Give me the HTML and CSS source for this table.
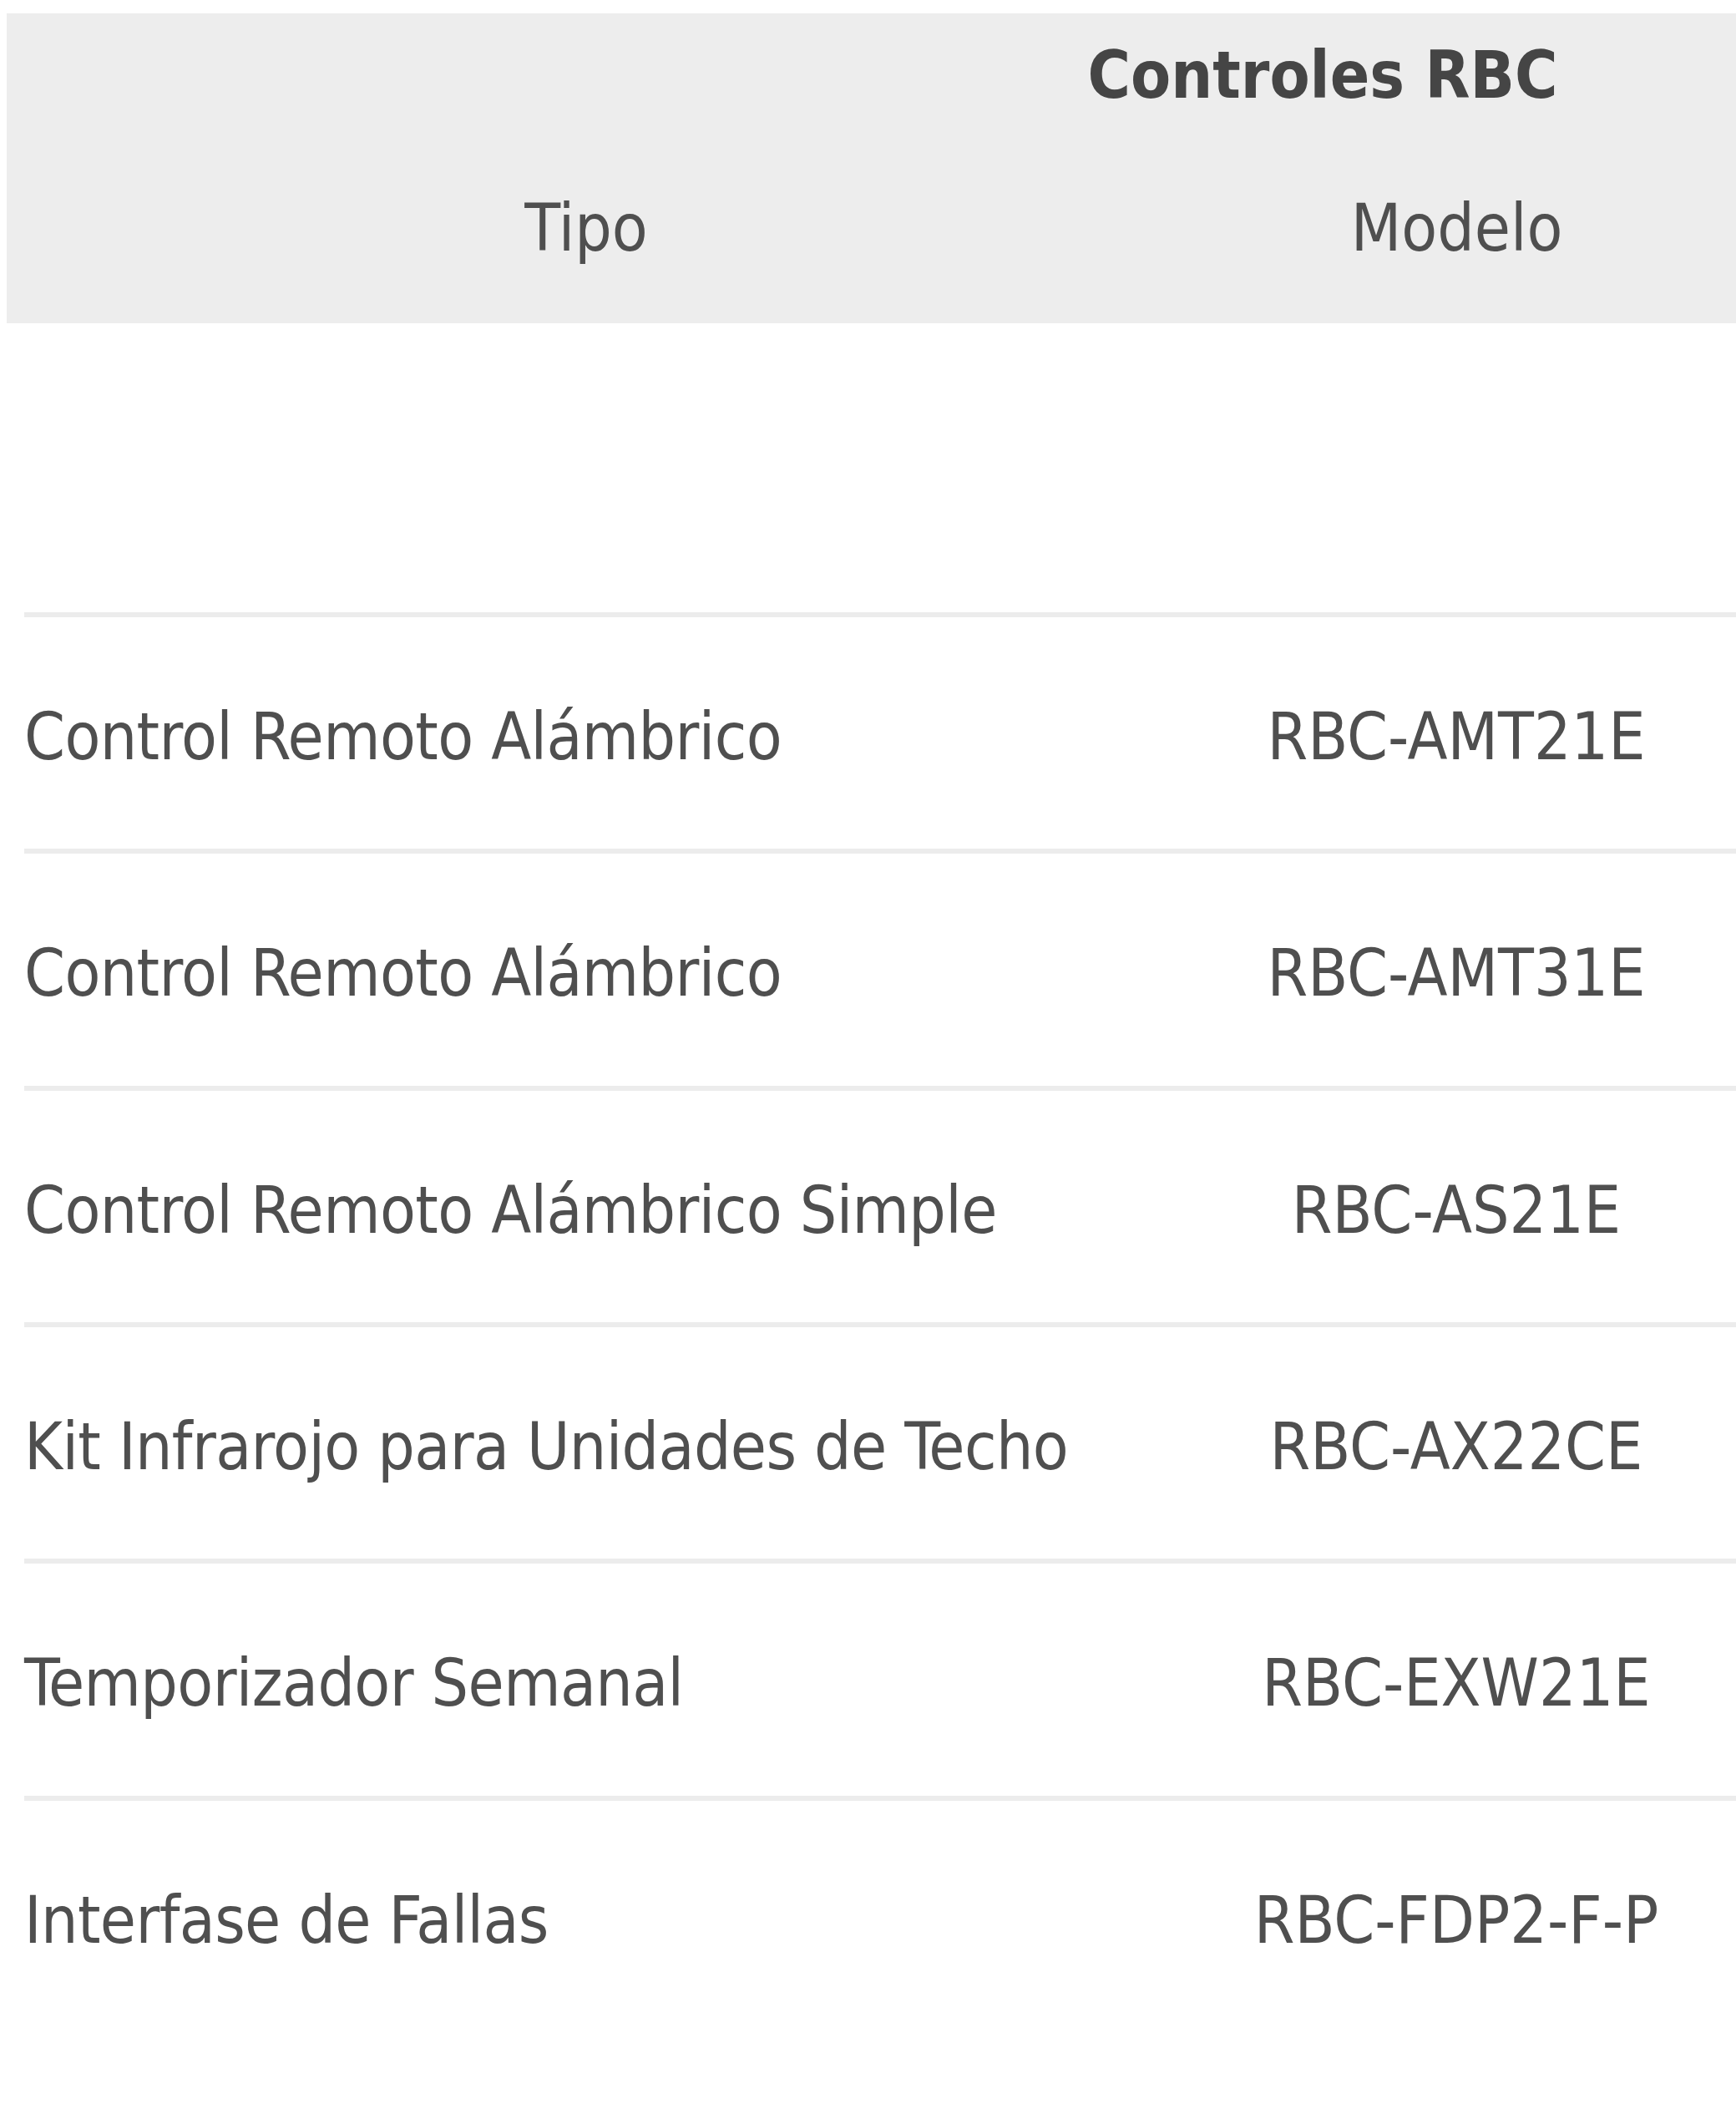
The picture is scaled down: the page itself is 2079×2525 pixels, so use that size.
FILE: index.html
```html
<!DOCTYPE html>
<html lang="es">
<head>
<meta charset="utf-8">
<title>Controles RBC</title>
<link rel="stylesheet" href="styles.css">
</head>
<body>
<div class="table">
  <div class="head">
    <div class="caption">Controles RBC</div>
    <div class="head-cols">
      <div class="th th-tipo">Tipo</div>
      <div class="th th-modelo">Modelo</div>
    </div>
  </div>
  <div class="spacer-row"></div>
  <div class="body">
    <div class="row"><div class="td td-type">Control Remoto Alámbrico</div><div class="td td-model">RBC-AMT21E</div></div>
    <div class="row"><div class="td td-type">Control Remoto Alámbrico</div><div class="td td-model">RBC-AMT31E</div></div>
    <div class="row"><div class="td td-type">Control Remoto Alámbrico Simple</div><div class="td td-model">RBC-AS21E</div></div>
    <div class="row"><div class="td td-type">Kit Infrarojo para Unidades de Techo</div><div class="td td-model">RBC-AX22CE</div></div>
    <div class="row"><div class="td td-type">Temporizador Semanal</div><div class="td td-model">RBC-EXW21E</div></div>
    <div class="row"><div class="td td-type">Interfase de Fallas</div><div class="td td-model">RBC-FDP2-F-P</div></div>
  </div>
</div>
</body>
</html>
```
FILE: styles.css
```css
html, body {
  margin: 0;
  padding: 0;
  background: #ffffff;
}

body {
  font-family: "DejaVu Sans Condensed", "DejaVu Sans", sans-serif;
  font-stretch: condensed;
  font-size: 78px;
  line-height: 90px;
  color: #4f4f4f;
  overflow-x: hidden;
}

.table {
  margin: 16px 0 0 8px;
  width: 2071px;
}

.head {
  background: #ededed;
  height: 371px;
  box-sizing: border-box;
  padding-top: 29px;
  display: flex;
  flex-direction: column;
}

.caption {
  font-weight: bold;
  color: #454545;
  text-align: center;
  padding-left: 1081px;
  white-space: nowrap;
}

.head-cols {
  margin-top: 93px;
  display: grid;
  grid-template-columns: 1388px 1fr;
}

.th {
  text-align: center;
  white-space: nowrap;
}

.th-modelo {
  padding-left: 14px;
}

.spacer-row {
  height: 346px;
}

.body {
  margin-left: 21px;
}

.row {
  display: grid;
  grid-template-columns: 1380px 1fr;
  border-top: 6px solid #ececec;
  height: 283.33px;
  box-sizing: border-box;
  padding-top: 98px;
}

.td {
  white-space: nowrap;
}

.td-type {
  letter-spacing: -0.6px;
}

.td-model {
  text-align: center;
}
```
